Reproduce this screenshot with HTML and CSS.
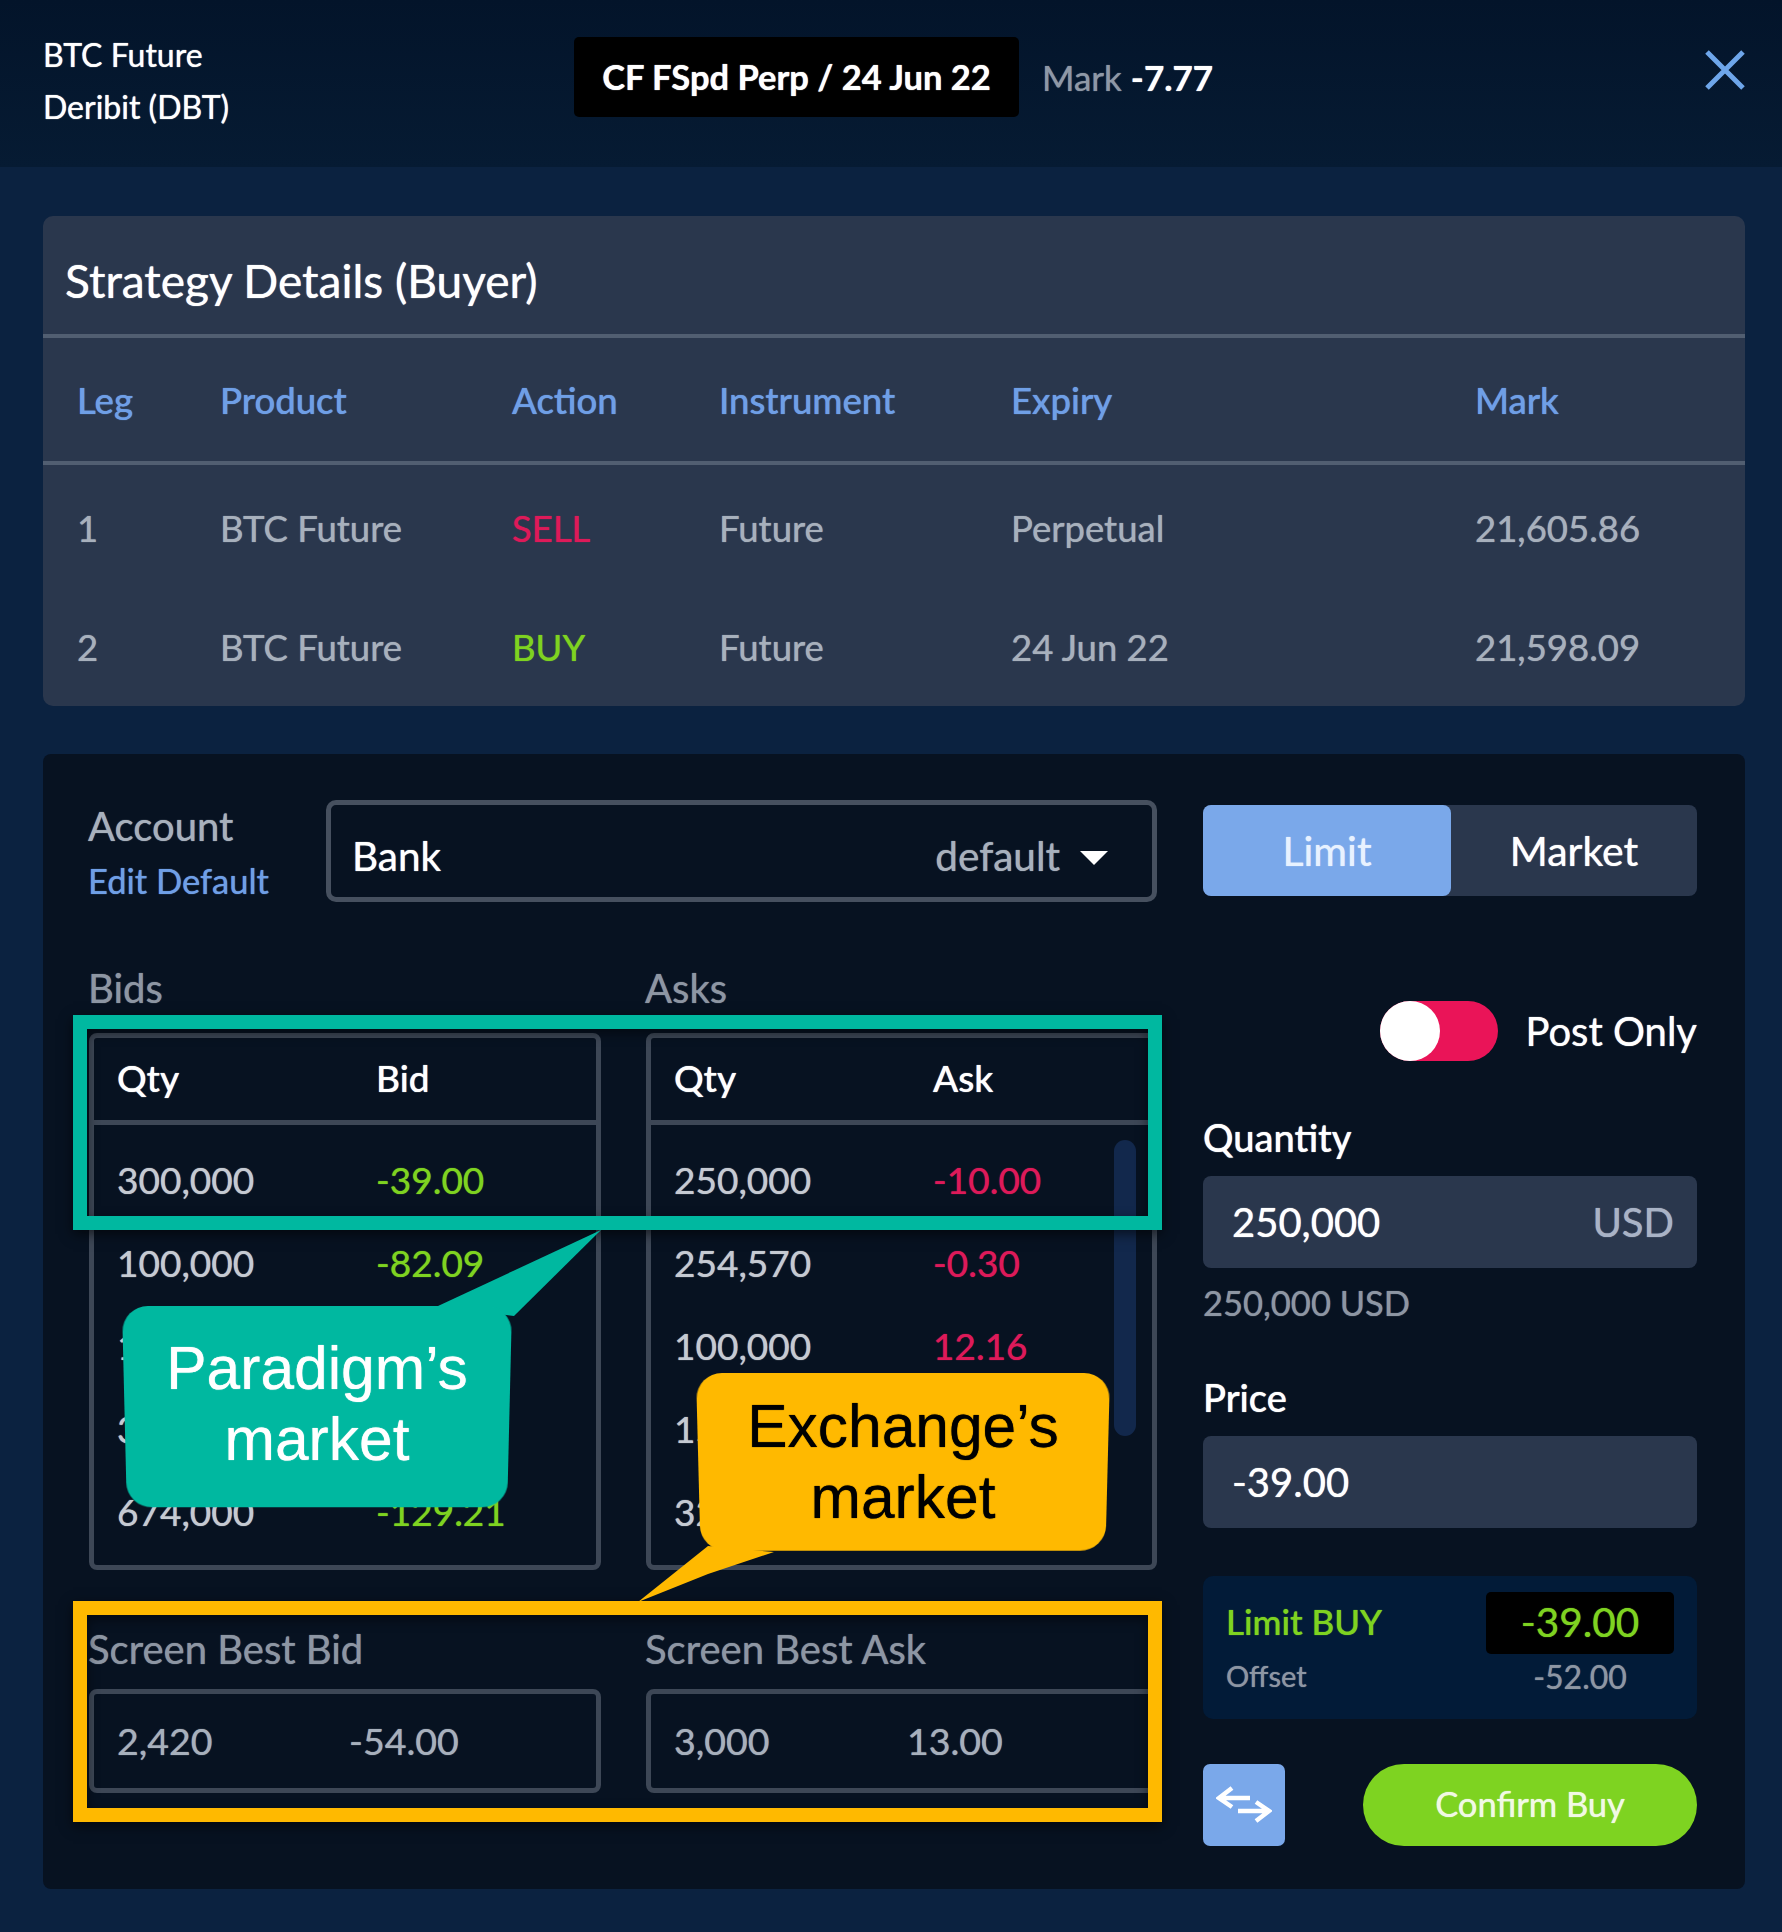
FILE: index.html
```html
<!DOCTYPE html>
<html lang="en">
<head>
<meta charset="utf-8">
<title>Confirm Buy</title>
<link rel="stylesheet" href="styles.css">
</head>
<body>
<div class="app">
  <header class="top">
    <div class="instrument-name"><div>BTC Future</div><div>Deribit (DBT)</div></div>
    <div class="pill">CF FSpd Perp / 24 Jun 22</div>
    <div class="mark"><span class="mark-label">Mark</span> <b>-7.77</b></div>
    <svg class="close" viewBox="0 0 40 40" aria-label="Close"><path d="M2 2 L38 38 M38 2 L2 38"/></svg>
  </header>
  <main class="main">
    <section class="strategy">
      <h2 class="strategy-title">Strategy Details (Buyer)</h2>
      <div class="legs legs-head">
        <span>Leg</span><span>Product</span><span>Action</span><span>Instrument</span><span>Expiry</span><span>Mark</span>
      </div>
      <div class="legs-body">
        <div class="legs legs-row">
          <span>1</span><span>BTC Future</span><span class="sell">SELL</span><span>Future</span><span>Perpetual</span><span>21,605.86</span>
        </div>
        <div class="legs legs-row">
          <span>2</span><span>BTC Future</span><span class="buy">BUY</span><span>Future</span><span>24 Jun 22</span><span>21,598.09</span>
        </div>
      </div>
    </section>
    <section class="ticket">
      <div class="left">
        <div class="account">
          <div class="account-labels"><div class="account-title">Account</div><div class="edit">Edit Default</div></div>
          <div class="select"><span class="bank">Bank</span><span class="default">default</span><span class="caret"></span></div>
        </div>
        <div class="pair labels-top"><div class="dim-label">Bids</div><div class="dim-label">Asks</div></div>
        <div class="pair">
          <div class="book">
            <div class="book-head"><span>Qty</span><span>Bid</span></div>
            <div class="book-body">
              <div class="book-row"><span>300,000</span><span class="buy">-39.00</span></div>
              <div class="book-row"><span>100,000</span><span class="buy">-82.09</span></div>
              <div class="book-row"><span>150,000</span><span class="buy">-95.00</span></div>
              <div class="book-row"><span>300,000</span><span class="buy">-110.50</span></div>
              <div class="book-row"><span>674,000</span><span class="buy">-129.21</span></div>
            </div>
          </div>
          <div class="book">
            <div class="book-head"><span>Qty</span><span>Ask</span></div>
            <div class="book-body">
              <div class="book-row"><span>250,000</span><span class="sell">-10.00</span></div>
              <div class="book-row"><span>254,570</span><span class="sell">-0.30</span></div>
              <div class="book-row"><span>100,000</span><span class="sell">12.16</span></div>
              <div class="book-row"><span>150,000</span><span class="sell">20.00</span></div>
              <div class="book-row"><span>320,000</span><span class="sell">31.50</span></div>
              <div class="scrollbar"></div>
            </div>
          </div>
        </div>
        <div class="pair labels-screen"><div class="dim-label">Screen Best Bid</div><div class="dim-label">Screen Best Ask</div></div>
        <div class="pair">
          <div class="best"><span>2,420</span><span>-54.00</span></div>
          <div class="best best-ask"><span>3,000</span><span>13.00</span></div>
        </div>
      </div>
      <div class="right">
        <div class="segment"><div class="seg seg-on">Limit</div><div class="seg">Market</div></div>
        <div class="post"><span class="toggle"><span class="knob"></span></span><span>Post Only</span></div>
        <div class="field-label first-label">Quantity</div>
        <div class="input"><span>250,000</span><span class="unit">USD</span></div>
        <div class="sub">250,000 USD</div>
        <div class="field-label">Price</div>
        <div class="input"><span>-39.00</span></div>
        <div class="summary">
          <div class="summary-left"><div class="limit-buy">Limit BUY</div><div class="offset">Offset</div></div>
          <div class="summary-right"><div class="summary-price">-39.00</div><div class="offset-val">-52.00</div></div>
        </div>
        <div class="actions">
          <button class="swap" aria-label="Swap">
            <svg viewBox="0 0 56 40"><path d="M16 3 L3 13 L16 22 M3 13 H34"/><path d="M40 17 L53 26 L40 36 M53 26 H22"/></svg>
          </button>
          <button class="confirm">Confirm Buy</button>
        </div>
      </div>
    </section>
  </main>

  <div class="hl hl-teal"></div>
  <div class="hl hl-amber"></div>

  <svg class="tail tail-teal" viewBox="0 0 180 90"><polygon points="175,2 88,88 12,78"/></svg>
  <div class="callout callout-teal">Paradigm’s<br>market</div>

  <svg class="tail tail-amber" viewBox="0 0 140 60"><polygon points="2,58 72,2 138,8 72,30"/></svg>
  <div class="callout callout-amber">Exchange’s<br>market</div>
</div>
</body>
</html>
```
FILE: styles.css
```css
* { box-sizing: border-box; }
html, body { margin: 0; padding: 0; }
body { background: #0b2240; font-family: Lato, "Open Sans", sans-serif; color: #fff; }
.app { position: relative; width: 1782px; height: 1932px; overflow: hidden; background: #0b2240; text-shadow: 0 0 1px currentColor; }

.top { height: 167px; display: flex; align-items: flex-start; padding-left: 43px; background: linear-gradient(#03142a, #061b33); }
.instrument-name { width: 531px; padding-top: 29px; font-size: 32px; line-height: 52px; }
.pill { width: 445px; height: 80px; margin-top: 37px; background: #000; border-radius: 5px; display: flex; align-items: center; justify-content: center; padding-bottom: 2px; font-size: 34.5px; font-weight: 700; }
.mark { margin-left: 23px; margin-top: 37px; line-height: 80px; font-size: 35px; }
.mark-label { color: #8e98a6; }
.close { width: 40px; height: 40px; margin-left: auto; margin-right: 37px; margin-top: 50px; fill: none; stroke: #6ea6ea; stroke-width: 5; }

.main { padding: 49px 37px 0 43px; }
.strategy { height: 490px; background: #2a374d; border-radius: 10px; overflow: hidden; }
.strategy-title { margin: 0; height: 122px; padding: 10px 0 0 22px; display: flex; align-items: center; font-size: 46px; font-weight: 400; border-bottom: 4px solid #515e71; }
.legs { display: grid; grid-template-columns: 143px 292px 207px 292px 464px 1fr; padding-left: 34px; align-items: center; font-size: 36.5px; }
.legs-head { height: 127px; padding-top: 1px; color: #6f9fe6; border-bottom: 4px solid #515e71; font-weight: 500; }
.legs-body { padding-top: 3px; }
.legs-row { height: 119px; color: #a7b0bc; }
.sell { color: #dd1a59; }
.buy { color: #7ed321; }

.ticket { margin-top: 48px; height: 1135px; background: #071221; border-radius: 8px; padding: 46px 48px 0 46px; display: grid; grid-template-columns: 1068px 494px; column-gap: 46px; align-items: start; }
.account { display: flex; height: 102px; }
.account-labels { width: 238px; margin-left: -1px; }
.account-title { font-size: 40px; line-height: 52px; color: #a7b0bc; }
.edit { font-size: 34.5px; line-height: 44px; color: #6f9fe6; margin-top: 7px; }
.select { flex: 1; border: 5px solid #46505f; border-radius: 10px; display: flex; align-items: center; padding: 8px 44px 0 21px; font-size: 40.5px; }
.bank { margin-right: auto; }
.default { color: #a7b0bc; margin-right: 20px; }
.caret { width: 0; height: 0; border-left: 14px solid transparent; border-right: 14px solid transparent; border-top: 14px solid #fff; margin-top: 6px; }

.pair { display: grid; grid-template-columns: 512px 511px; column-gap: 45px; }
.dim-label { font-size: 40px; line-height: 44px; color: #8d96a3; margin-left: -1px; }
.labels-top { margin-top: 64px; margin-bottom: 23px; }
.labels-screen { margin-top: 57px; margin-bottom: 18px; }

.book { height: 537px; border: 5px solid #3d4756; border-radius: 8px; }
.book-head { height: 87px; padding: 0 0 3px 23px; display: grid; grid-template-columns: 259px 1fr; align-items: center; border-bottom: 5px solid #3d4756; font-size: 37px; font-weight: 500; }
.book-body { position: relative; padding-top: 13px; }
.book-row { height: 83px; display: grid; grid-template-columns: 259px 1fr; align-items: center; padding-left: 23px; font-size: 37px; color: #c5cad2; }
.scrollbar { position: absolute; top: 15px; right: 16px; width: 22px; height: 296px; border-radius: 11px; background: #12284c; }

.best { height: 104px; padding: 0 0 2px 23px; border: 5px solid #3d4756; border-radius: 8px; display: grid; grid-template-columns: 232px 1fr; align-items: center; font-size: 37.5px; color: #a7b0bc; }
.best-ask { grid-template-columns: 233px 1fr; }

.segment { margin-top: 5px; height: 91px; display: grid; grid-template-columns: 248px 1fr; background: #2a374d; border-radius: 8px; font-size: 41px; }
.seg { display: flex; align-items: center; justify-content: center; }
.seg-on { background: #7aa8ea; border-radius: 8px; color: #e8f2ff; }
.post { margin-top: 104px; height: 62px; display: flex; justify-content: flex-end; align-items: center; gap: 27px; font-size: 40px; }
.toggle { width: 118px; height: 60px; background: #ea1458; border-radius: 30px; display: block; }
.knob { display: block; width: 60px; height: 60px; border-radius: 50%; background: #fff; }
.field-label { margin-top: 50px; font-size: 38px; line-height: 44px; font-weight: 500; }
.first-label { margin-top: 53px; }
.input { margin-top: 17px; height: 92px; background: #2a374d; border-radius: 8px; display: flex; align-items: center; justify-content: space-between; padding: 0 23px 0 29px; font-size: 40px; }
.unit { color: #a9b3c6; }
.sub { margin-top: 13px; font-size: 34.5px; line-height: 44px; color: #8d96a3; }
.summary { margin-top: 48px; height: 143px; background: #021b38; border-radius: 10px; display: flex; justify-content: space-between; padding: 16px 23px 0 23px; }
.limit-buy { margin-top: 7px; font-size: 35px; line-height: 44px; color: #7ed321; font-weight: 500; }
.offset { margin-top: 16px; font-size: 29px; line-height: 34px; color: #8d96a3; }
.summary-right { width: 188px; text-align: center; }
.summary-price { height: 62px; line-height: 60px; background: #000; border-radius: 5px; font-size: 40.5px; color: #7ed321; }
.offset-val { margin-top: 6px; font-size: 32px; line-height: 34px; color: #8d96a3; }
.actions { margin-top: 45px; height: 82px; display: flex; justify-content: space-between; }
.swap { width: 82px; height: 82px; padding: 0; border: 0; background: #7aa8ea; border-radius: 7px; display: flex; align-items: center; justify-content: center; }
.swap svg { width: 56px; height: 40px; fill: none; stroke: #fff; stroke-width: 4.5; }
.confirm { width: 334px; height: 82px; border: 0; border-radius: 41px; padding: 0 0 4px; background: #7ed321; color: #f1f9e4; font-family: inherit; font-size: 34.5px; text-shadow: 0 0 1px currentColor; }

.hl { position: absolute; left: 73px; width: 1089px; border-style: solid; border-width: 14px; box-shadow: 0 4px 12px rgba(0,0,0,.6), inset 0 4px 12px rgba(0,0,0,.5); }
.hl-teal { top: 1015px; height: 215px; border-color: #00b8a0; }
.hl-amber { top: 1601px; height: 221px; border-color: #ffb900; }

.callout { position: absolute; isolation: isolate; display: flex; align-items: center; justify-content: center; text-align: center; font-family: "Liberation Sans", Arial, sans-serif; font-size: 60.5px; line-height: 71px; }
.callout::before { content: ""; position: absolute; inset: 0 0 -5px 0; z-index: -1; border-radius: 26px; transform-origin: 50% 0; transform: perspective(1000px) rotateX(-7deg); }
.callout-teal { left: 122px; top: 1306px; width: 390px; height: 203px; padding-bottom: 8px; color: #fff; }
.callout-teal::before { background: #00b8a0; }
.callout-amber { left: 696px; top: 1373px; width: 414px; height: 178px; color: #000; }
.callout-amber::before { background: #ffb900; }
.tail { position: absolute; }
.tail-teal { left: 426px; top: 1228px; width: 180px; height: 90px; fill: #00b8a0; }
.tail-amber { left: 636px; top: 1544px; width: 140px; height: 60px; fill: #ffb900; }
```
